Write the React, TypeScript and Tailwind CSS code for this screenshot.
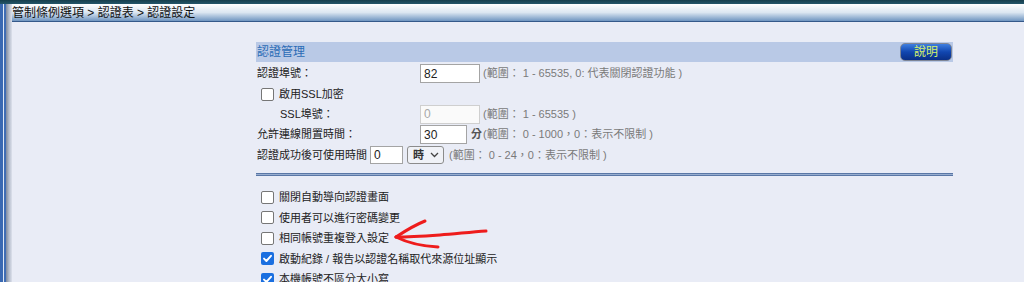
import React from 'react';

const FONT = "font-['Liberation_Sans','Noto_Sans_CJK_TC',sans-serif]";

const Check: React.FC<{ checked?: boolean }> = ({ checked }) =>
  checked ? (
    <span className="flex h-[13px] w-[13px] shrink-0 items-center justify-center rounded-[2px] bg-[#1a6fe0]">
      <svg width="11" height="11" viewBox="0 0 11 11">
        <path d="M2 5.6 L4.4 8 L9 2.8" fill="none" stroke="#fff" strokeWidth="1.9" strokeLinecap="round" strokeLinejoin="round" />
      </svg>
    </span>
  ) : (
    <span className="h-[13px] w-[13px] shrink-0 rounded-[2px] border border-[#767676] bg-white" />
  );

const Range: React.FC<{ children: React.ReactNode; className?: string }> = ({ children, className = '' }) => (
  <span className={`text-[11px] text-[#7a7a7a] whitespace-nowrap ${className}`}>{children}</span>
);

const options = [
  { label: '關閉自動導向認證畫面', checked: false },
  { label: '使用者可以進行密碼變更', checked: false },
  { label: '相同帳號重複登入設定', checked: false },
  { label: '啟動紀錄 / 報告以認證名稱取代來源位址顯示', checked: true },
  { label: '本機帳號不區分大小寫', checked: true },
];

export default function App() {
  return (
    <div className={`relative flex h-[282px] w-[1024px] flex-col overflow-hidden bg-[#e9ecf6] ${FONT}`}>
      <div className="h-[4px] shrink-0 bg-gradient-to-b from-[#163e4c] to-[#24566a]" />
      <div className="flex flex-1">
        {/* left frame edge */}
        <div className="flex w-[12px] shrink-0">
          <div className="w-[3px] bg-[#3a69b2]" />
          <div className="w-[1px] bg-[#dfe8f5]" />
          <div className="w-[2px] bg-[#3f6db4]" />
          <div className="w-[6px] bg-gradient-to-r from-[#7d8aa0] via-[#b4bccb] to-[#dde1ec]" />
        </div>

        <div className="flex flex-1 flex-col">
          {/* breadcrumb */}
          <div className="flex h-[18px] shrink-0 items-center border-b border-[#35598a] bg-gradient-to-b from-[#ffffff] via-[#dbe6f1] to-[#6f95c0] text-[12px] text-[#111]">
            <span>管制條例選項 &gt; 認證表 &gt; 認證設定</span>
          </div>

          <div className="pl-[244px] pt-[20px]">
            <div className="w-[697px]">
              {/* header */}
              <div className="flex h-[20px] items-center justify-between bg-[#b9c9e6] pl-[1px]">
                <span className="text-[12px] text-[#2b6cb6]">認證管理</span>
                <button className="mr-[1px] flex h-[18px] w-[52px] items-center justify-center rounded-[5px] border border-[#7f8696] bg-gradient-to-b from-[#3f7fe0] via-[#1146b0] to-[#0a2f86] text-[12px] leading-none text-[#d6f26a]">
                  說明
                </button>
              </div>

              {/* port */}
              <div className="mt-[1px] flex h-[21px] items-center">
                <span className="w-[164px] pl-[1px] text-[11px] text-[#222]">認證埠號：</span>
                <div className="flex h-[19px] w-[60px] items-center border border-[#a4a4a4] bg-white pl-[3px] text-[12px] text-[#222]">82</div>
                <Range className="ml-[3px]">(範圍： 1 - 65535, 0: 代表關閉認證功能 )</Range>
              </div>

              {/* ssl */}
              <div className="flex h-[20px] items-center gap-[5px] pl-[5px]">
                <Check />
                <span className="text-[11px] text-[#222]">啟用SSL加密</span>
              </div>

              <div className="flex h-[20px] items-center">
                <span className="w-[164px] pl-[24px] text-[11px] text-[#222]">SSL埠號：</span>
                <div className="flex h-[19px] w-[60px] items-center border border-[#cfcfcf] bg-[#fafafa] pl-[3px] text-[12px] text-[#a8a8a8]">0</div>
                <Range className="ml-[3px]">(範圍： 1 - 65535 )</Range>
              </div>

              {/* idle */}
              <div className="flex h-[21px] items-center">
                <span className="w-[164px] pl-[1px] text-[11px] text-[#222]">允許連線閒置時間：</span>
                <div className="flex h-[19px] w-[47px] items-center border border-[#a4a4a4] bg-white pl-[3px] text-[12px] text-[#222]">30</div>
                <span className="ml-[4px] text-[11px] font-bold text-[#555]">分</span>
                <Range className="ml-[1px]">(範圍： 0 - 1000，0：表示不限制 )</Range>
              </div>

              {/* usable time */}
              <div className="flex h-[20px] items-center">
                <span className="pl-[1px] text-[11px] text-[#222]">認證成功後可使用時間</span>
                <div className="ml-[3px] flex h-[18px] w-[33px] items-center border border-[#a4a4a4] bg-white pl-[3px] text-[12px] text-[#222]">0</div>
                <div className="ml-[4px] flex h-[18px] w-[37px] items-center justify-between rounded-[3px] border border-[#8c8c8c] bg-[#f0f2f7] pl-[5px] pr-[4px]">
                  <span className="text-[11px] font-bold text-[#333]">時</span>
                  <svg width="9" height="6" viewBox="0 0 9 6">
                    <path d="M1 1 L4.5 4.5 L8 1" fill="none" stroke="#444" strokeWidth="1.3" />
                  </svg>
                </div>
                <Range className="ml-[5px]">(範圍： 0 - 24，0：表示不限制 )</Range>
              </div>

              {/* separator */}
              <div className="mt-[8px] h-[3px] border-y border-[#5a77a6] bg-[#98aed0]" />

              {/* options */}
              <div className="mt-[11px] flex flex-col pl-[5px]">
                {options.map((o) => (
                  <div key={o.label} className="flex h-[20.5px] items-center gap-[5px]">
                    <Check checked={o.checked} />
                    <span className="text-[11px] text-[#222]">{o.label}</span>
                  </div>
                ))}
              </div>
            </div>
          </div>
        </div>
      </div>

      {/* red hand-drawn arrow annotation */}
      <svg className="pointer-events-none absolute left-0 top-0" width="1024" height="282">
        <g fill="none" stroke="#ee1c1c" strokeWidth="3" strokeLinecap="round" strokeLinejoin="round">
          <path d="M486 231 C470 232 455 234 440 235 C425 236 410 237 396 237" />
          <path d="M396 237 C405 231 415 225 425 221" />
          <path d="M396 237 C406 242 418 246 438 247" />
        </g>
      </svg>
    </div>
  );
}
